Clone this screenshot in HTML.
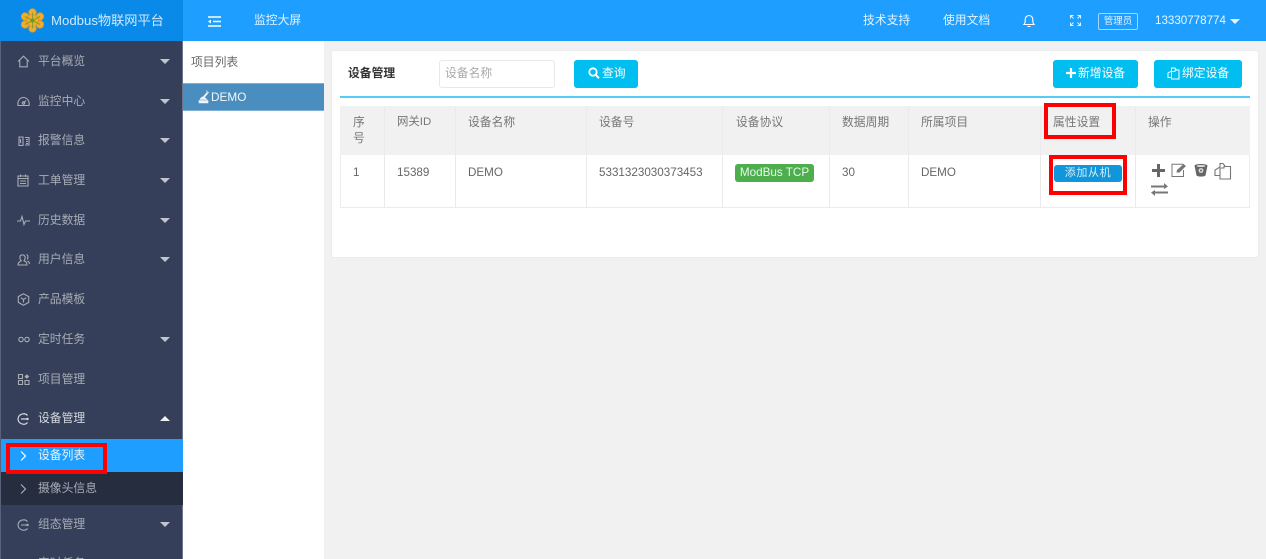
<!DOCTYPE html>
<html lang="zh"><head><meta charset="utf-8"><title>设备管理</title>
<style>
*{box-sizing:border-box}
html,body{margin:0;padding:0;width:1266px;height:559px;overflow:hidden;background:#f1f1f1}
#root{position:absolute;left:0;top:0;width:1266px;height:559px;overflow:hidden;background:#f1f1f1;font-family:"Liberation Sans","Noto Sans CJK SC",sans-serif;font-size:11.8px;color:#666;filter:blur(.3px)}
.a{position:absolute;white-space:nowrap;line-height:16px}
.b{position:absolute}
svg{position:absolute;overflow:visible}
.m{color:#a7acb6;left:38px}
.arr{position:absolute;left:160px;width:0;height:0;border-left:5px solid transparent;border-right:5px solid transparent;border-top:5px solid #c2c5cc}
.th{color:#777}
.td{color:#666;font-size:11.65px;top:164.5px}
.v{position:absolute;width:1px;background:#eaeaea}
.btn{position:absolute;background:#00bff0;border-radius:3px;color:#fff;height:28px;line-height:28px;white-space:nowrap}
.red{position:absolute;border:4px solid #f00}
.i{fill:none;stroke:#a7acb6;stroke-width:1.1}
</style></head><body><div id="root">
<!-- header -->
<div class="b" style="left:0;top:0;width:1266px;height:41px;background:#1e9fff"></div>
<div class="b" style="left:0;top:0;width:183px;height:41px;background:#0a8ae8"></div>
<svg style="left:20px;top:8px" width="25" height="25" viewBox="0 0 25 25">
<g fill="#eeb02c" stroke="#e8981c" stroke-width="1"><circle cx="12.5" cy="4.5" r="3.6"/><circle cx="12.5" cy="20.5" r="3.6"/><circle cx="5" cy="8.5" r="3.6"/><circle cx="20" cy="8.5" r="3.6"/><circle cx="5" cy="16.5" r="3.6"/><circle cx="20" cy="16.5" r="3.6"/><circle cx="12.5" cy="12.5" r="6"/></g>
<g stroke="#8a9c2c" stroke-width="1"><path d="M12.5 4.500V20.500M5 8.500L20 16.500M20 8.500L5 16.500"/></g><circle cx="12.5" cy="12.500" r="2" fill="#6d9a30"/></svg>
<div class="a" style="left:51px;top:12.500px;color:#cfe8fb;font-size:13.2px">Modbus物联网平台</div>
<svg style="left:208px;top:16px" width="13" height="11" viewBox="0 0 13 11"><path d="M0 1H13M5 5.500H13M0 10H13" stroke="#fff" stroke-width="1.600"/><path d="M3 3.500L0 5.500L3 7.500Z" fill="#fff"/></svg>
<div class="a" style="left:254px;top:12px;color:#e4f3ff">监控大屏</div>
<div class="a" style="left:863px;top:12px;color:#e4f3ff">技术支持</div>
<div class="a" style="left:943px;top:12px;color:#e4f3ff">使用文档</div>
<svg style="left:1023px;top:14px" width="12" height="14" viewBox="0 0 12 14"><path d="M1 10.500C2.400 9 2.200 7.500 2.200 5.500C2.200 3.200 3.800 1.500 6 1.500C8.200 1.500 9.800 3.200 9.800 5.500C9.800 7.500 9.600 9 11 10.500ZM4.500 12.500H7.500" fill="none" stroke="#fff" stroke-width="1.100"/></svg>
<svg style="left:1070px;top:15px" width="11" height="11" viewBox="0 0 11 11"><path d="M0.500 3.500V0.500H3.500M7.500 0.500H10.500V3.500M0.500 7.500V10.500H3.500M10.500 7.500V10.500H7.500M1 1L3.500 3.500M10 1L7.500 3.500M1 10L3.500 7.500M10 10L7.500 7.500" fill="none" stroke="#e4f3ff" stroke-width="1"/></svg>
<div class="a" style="left:1098px;top:12.500px;width:40px;height:17px;border:1px solid #a8d6fa;border-radius:2px;color:#e4f3ff;font-size:9.500px;text-align:center;line-height:15px">管理员</div>
<div class="a" style="left:1155px;top:12.500px;color:#eaf6ff;font-size:11.600px">13330778774</div>
<div class="b" style="left:1230px;top:19px;width:0;height:0;border-left:5px solid transparent;border-right:5px solid transparent;border-top:5px solid #eaf6ff"></div>

<!-- sidebar -->
<div class="b" style="left:0;top:41px;width:183px;height:518px;background:#353f59;border-left:1px solid #59627a"></div>
<div class="b" style="left:182px;top:41px;width:1px;height:518px;background:#6d7688"></div>
<div class="a m" style="top:53px">平台概览</div><div class="arr" style="top:59px"></div>
<div class="a m" style="top:93px">监控中心</div><div class="arr" style="top:99px"></div>
<div class="a m" style="top:132px">报警信息</div><div class="arr" style="top:138px"></div>
<div class="a m" style="top:172px">工单管理</div><div class="arr" style="top:178px"></div>
<div class="a m" style="top:212px">历史数据</div><div class="arr" style="top:218px"></div>
<div class="a m" style="top:251px">用户信息</div><div class="arr" style="top:257px"></div>
<div class="a m" style="top:291px">产品模板</div>
<div class="a m" style="top:331px">定时任务</div><div class="arr" style="top:337px"></div>
<div class="a m" style="top:371px">项目管理</div>
<div class="a m" style="top:410px;color:#d5d8de">设备管理</div>
<div class="arr" style="top:416px;border-top:0;border-bottom:5px solid #f0f0f0"></div>
<div class="b" style="left:1px;top:439px;width:182px;height:33px;background:#1e9fff"></div>
<div class="b" style="left:1px;top:472px;width:182px;height:33px;background:#252d3f"></div>
<div class="a" style="left:38px;top:447px;color:#e6f4ff">设备列表</div>
<div class="a" style="left:38px;top:480px;color:#a7acb6">摄像头信息</div>
<svg style="left:20px;top:451px" width="7" height="10" viewBox="0 0 7 10"><path d="M1 0.500L5.500 5L1 9.500" fill="none" stroke="#fff" stroke-width="1.200"/></svg>
<svg style="left:20px;top:484px" width="7" height="10" viewBox="0 0 7 10"><path d="M1 0.500L5.500 5L1 9.500" fill="none" stroke="#a7acb6" stroke-width="1.200"/></svg>
<div class="a m" style="top:516px">组态管理</div><div class="arr" style="top:522px"></div>
<div class="a m" style="top:555px">定时任务</div>

<!-- sidebar icons -->
<svg style="left:17px;top:55px" width="13" height="13" viewBox="0 0 13 13"><path class="i" d="M1 6.500L6.500 1.200L12 6.500M2.800 5.500V11.800H10.200V5.500"/></svg>
<svg style="left:17px;top:96px" width="13" height="12" viewBox="0 0 13 12"><path class="i" d="M1 9.500C.2 5 3 1.500 6.500 1.500C10 1.500 12.800 5 12 9.500H1ZM6.500 7L9 4.500"/><circle cx="6.500" cy="7" r="1.200" class="i"/></svg>
<svg style="left:18px;top:135px" width="12" height="12" viewBox="0 0 12 12"><path class="i" d="M1 2H5V10.500H1ZM7 2.500H11V10H7M8 4.500H10M8 6.500H10M8 8.500H10M2.500 4V8"/></svg>
<svg style="left:17px;top:174px" width="12" height="13" viewBox="0 0 12 13"><path class="i" d="M1 2H11V12H1ZM1 4.500H11M3.500 .5V3M8.500 .5V3M3 7H9M3 9.500H9"/></svg>
<svg style="left:17px;top:215px" width="13" height="11" viewBox="0 0 13 11"><path class="i" d="M0 6H3.500L5 1.500L7 9.500L8.500 6H13"/></svg>
<svg style="left:17px;top:253px" width="13" height="13" viewBox="0 0 13 13"><path class="i" d="M1 12C1 9 3 8.500 4.200 7.800C3 6.500 2.800 5 3 3.500C3.500 1.500 7 1.200 8 3.500C8.400 5 8 6.500 7 7.800C8.500 8.500 10 9 10 12ZM9.500 1.500C11 2 11.500 4.500 10.300 6.500M10.500 8C11.500 8.500 12.500 9.500 12.500 11"/></svg>
<svg style="left:17px;top:293px" width="13" height="13" viewBox="0 0 13 13"><path class="i" d="M6.500 .8L11.700 3.600V9.400L6.500 12.200L1.300 9.400V3.600ZM3.800 4.800L6.500 6.500L9.200 4.800M6.500 6.500V9.500"/></svg>
<svg style="left:18px;top:336px" width="12" height="7" viewBox="0 0 12 7"><circle cx="3" cy="3.500" r="2.200" class="i"/><circle cx="9" cy="3.500" r="2.200" class="i"/></svg>
<svg style="left:18px;top:374px" width="12" height="11" viewBox="0 0 12 11"><path class="i" d="M.5 .5H4.500V4.500H.5ZM.5 6.500H4.500V10.500H.5ZM7 6.500H11V10.500H7Z"/><path d="M8.800 .3L11.300 2.600L8.800 4.900L6.400 2.600Z" fill="#a7acb6"/></svg>
<svg style="left:17px;top:413px" width="13" height="12" viewBox="0 0 13 12"><path d="M10.500 2.500C8 -.5 1.500 .5 1 6C1.500 11.500 8 12.500 10.500 9.500M4 6H10" fill="none" stroke="#d5d8de" stroke-width="1.200"/><circle cx="10.500" cy="6" r="1.200" fill="#d5d8de"/></svg>
<svg style="left:17px;top:519px" width="13" height="12" viewBox="0 0 13 12"><path d="M10.500 2.500C8 -.5 1.500 .5 1 6C1.500 11.500 8 12.500 10.500 9.500M4 6H10" fill="none" stroke="#a7acb6" stroke-width="1.100"/><circle cx="10.500" cy="6" r="1.200" fill="#a7acb6"/></svg>

<!-- project column -->
<div class="b" style="left:183px;top:41px;width:141px;height:518px;background:#fff"></div>
<div class="a" style="left:191px;top:54px;color:#666">项目列表</div>
<div class="b" style="left:183px;top:83px;width:141px;height:28px;background:#4a8dbf;border-top:1px solid #7fb0d3;border-bottom:1px solid #7fb0d3"></div>
<svg style="left:198px;top:90px" width="12" height="14" viewBox="0 0 12 14"><path d="M1 13V10.500H10V13ZM2 9.500C2.500 7.500 4 7 5.500 6.500L9 2.500L9.800 3.300L6.500 7.500L9 9.500ZM8 .5L11 3" fill="#eef5fa" stroke="#eef5fa" stroke-width=".6"/></svg>
<div class="a" style="left:211px;top:88.500px;color:#f2f7fb;font-size:11.800px">DEMO</div>

<!-- card -->
<div class="b" style="left:331px;top:50px;width:928px;height:208px;background:#fff;border:1px solid #ececec;border-radius:3px"></div>
<div class="a" style="left:348px;top:65px;color:#333;font-weight:700">设备管理</div>
<div class="b" style="left:439px;top:60px;width:116px;height:28px;border:1px solid #e8e8e8;border-radius:3px;background:#fff"></div>
<div class="a" style="left:445px;top:65px;color:#aaa">设备名称</div>
<div class="btn" style="left:574px;top:60px;width:64px"></div>
<svg style="left:588px;top:67px" width="12" height="13" viewBox="0 0 12 13"><circle cx="5" cy="5" r="3.700" fill="none" stroke="#fff" stroke-width="1.800"/><path d="M7.800 7.800L11 11.300" stroke="#fff" stroke-width="2"/></svg>
<div class="a" style="left:602px;top:65px;color:#fff">查询</div>
<div class="btn" style="left:1053px;top:60px;width:85px"></div>
<svg style="left:1066px;top:68px" width="10" height="10" viewBox="0 0 10 10"><path d="M5 0V10M0 5H10" stroke="#fff" stroke-width="2.200"/></svg>
<div class="a" style="left:1078px;top:65px;color:#fff">新增设备</div>
<div class="btn" style="left:1154px;top:60px;width:88px"></div>
<svg style="left:1167px;top:67px" width="13" height="13" viewBox="0 0 13 13"><path d="M4.500 4V1H8L9.500 3M4.500 4L1 6V10.500H4.500M4.500 4.500H8V3H12V12H4.500Z" fill="none" stroke="#fff" stroke-width="1"/></svg>
<div class="a" style="left:1182px;top:65px;color:#fff">绑定设备</div>
<div class="b" style="left:340px;top:96px;width:910px;height:2px;background:#55ccf5"></div>

<!-- table -->
<div class="b" style="left:340px;top:106px;width:910px;height:49px;background:#f1f1f1"></div>
<div class="b" style="left:340px;top:155px;width:910px;height:53px;background:#fff;border:1px solid #ececec;border-top:0"></div>
<div class="v" style="left:384px;top:106px;height:102px"></div>
<div class="v" style="left:455px;top:106px;height:102px"></div>
<div class="v" style="left:586px;top:106px;height:102px"></div>
<div class="v" style="left:722px;top:106px;height:102px"></div>
<div class="v" style="left:829px;top:106px;height:102px"></div>
<div class="v" style="left:908px;top:106px;height:102px"></div>
<div class="v" style="left:1040px;top:106px;height:102px"></div>
<div class="v" style="left:1135px;top:106px;height:102px"></div>

<div class="a th" style="left:353px;top:114px">序</div>
<div class="a th" style="left:353px;top:130px">号</div>
<div class="a th" style="left:397px;top:114px;font-size:11.400px">网关ID</div>
<div class="a th" style="left:468px;top:114px">设备名称</div>
<div class="a th" style="left:599px;top:114px">设备号</div>
<div class="a th" style="left:736px;top:114px">设备协议</div>
<div class="a th" style="left:842px;top:114px">数据周期</div>
<div class="a th" style="left:921px;top:114px">所属项目</div>
<div class="a th" style="left:1053px;top:114px">属性设置</div>
<div class="a th" style="left:1148px;top:114px">操作</div>

<div class="a td" style="left:353px">1</div>
<div class="a td" style="left:397px">15389</div>
<div class="a td" style="left:468px">DEMO</div>
<div class="a td" style="left:599px">5331323030373453</div>
<div class="a" style="left:735px;top:164px;width:79px;height:18px;line-height:17px;background:#4cae4c;border-radius:3px;color:#eaf8ea;text-align:center;font-size:11.700px">ModBus TCP</div>
<div class="a td" style="left:842px">30</div>
<div class="a td" style="left:921px">DEMO</div>
<div class="a" style="left:1054px;top:165px;width:68px;height:17px;line-height:17px;background:#1296db;border-radius:3px;color:#d5eefb;text-align:center;font-size:11px;letter-spacing:.6px">添加从机</div>

<!-- action icons -->
<svg style="left:1152px;top:164px" width="13" height="13" viewBox="0 0 13 13"><path d="M6.500 0V13M0 6.500H13" stroke="#666" stroke-width="3"/></svg>
<svg style="left:1171px;top:163px" width="17" height="15" viewBox="0 0 17 15"><path d="M12 3V1.200H1V13.500H12.500V7" fill="none" stroke="#777" stroke-width="1"/><path d="M5.500 9.500L6 7L12.500 1L15 3L8.500 9.500Z" fill="#777"/></svg>
<svg style="left:1194px;top:163px" width="14" height="14" viewBox="0 0 14 14"><path d="M.5 2.500C1.500 .5 12.500 .5 13.500 2.500L11.500 12.500C10 14 4 14 2.500 12.500Z" fill="#666"/><ellipse cx="7" cy="3" rx="4.500" ry="1" fill="#ddd"/><circle cx="7" cy="7.500" r="2.400" fill="#ddd"/><circle cx="7" cy="7.500" r="1" fill="#666"/></svg>
<svg style="left:1214px;top:162px" width="18" height="18" viewBox="0 0 18 18"><path d="M6 5V1.500H9L11 4M6 5L1 8V13.500H6M6 6H10V4.500H16.500V17H6Z" fill="none" stroke="#777" stroke-width="1.100"/></svg>
<svg style="left:1151px;top:183px" width="17" height="13" viewBox="0 0 17 13"><path d="M0 3.500H14M3 9.500H17" stroke="#777" stroke-width="2"/><path d="M13 0L17 3.500L13 6ZM4 7L0 9.500L4 13Z" fill="#777"/></svg>

<!-- red annotation boxes -->
<div class="red" style="left:1044px;top:103px;width:72px;height:36px"></div>
<div class="red" style="left:1049px;top:155px;width:78px;height:40px"></div>
<div class="red" style="left:6px;top:443px;width:101px;height:31px"></div>
</div></body></html>
